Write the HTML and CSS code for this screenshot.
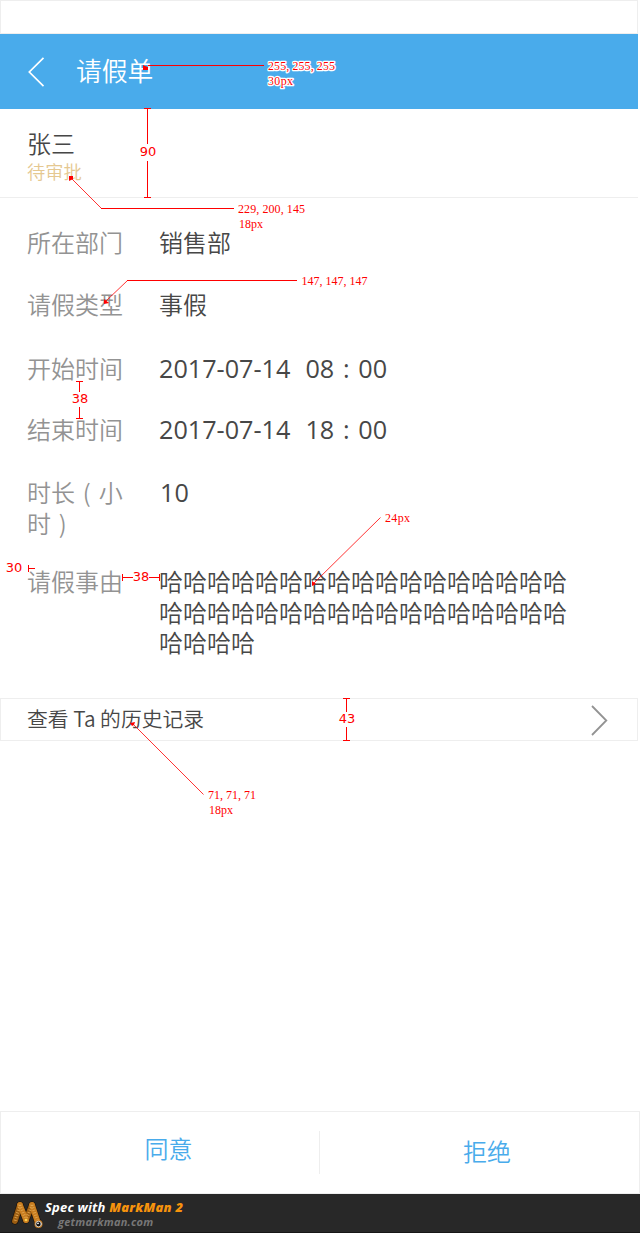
FILE: index.html
```html
<!DOCTYPE html>
<html lang="zh-CN">
<head>
<meta charset="utf-8">
<title>请假单</title>
<link rel="stylesheet" href="styles.css">
</head>
<body>
<div class="page">
  <div class="statusbar"></div>
  <header class="navbar">
    <svg class="back" width="17" height="30" viewBox="0 0 17 30"><path d="M15.500 .8 1.300 15 15.500 29.200"/></svg>
    <h1 class="title">请假单</h1>
  </header>
  <section class="person">
    <div class="name">张三</div>
    <div class="status">待审批</div>
  </section>
  <dl class="details">
    <div class="row dept"><dt>所在部门</dt><dd>销售部</dd></div>
    <div class="row type"><dt>请假类型</dt><dd>事假</dd></div>
    <div class="row start"><dt>开始时间</dt><dd class="num"><span>2017-07-14</span><span class="time">08<i>:</i>00</span></dd></div>
    <div class="row end"><dt>结束时间</dt><dd class="num"><span>2017-07-14</span><span class="time">18<i>:</i>00</span></dd></div>
    <div class="row hours"><dt>时长&nbsp;(&nbsp;小时&nbsp;)</dt><dd class="num ten">10</dd></div>
    <div class="row reason"><dt>请假事由</dt><dd>哈哈哈哈哈哈哈哈哈哈哈哈哈哈哈哈哈哈哈哈哈哈哈哈哈哈哈哈哈哈哈哈哈哈哈哈哈哈</dd></div>
  </dl>
  <a class="history"><span>查看 Ta 的历史记录</span>
    <svg class="more" width="17" height="31" viewBox="0 0 17 31"><path d="M1 1 15.300 15.500 1 30"/></svg>
  </a>
  <div class="actions">
    <button class="agree">同意</button>
    <button class="reject">拒绝</button>
  </div>
  <footer class="brand">
    <svg class="logo" width="34" height="32" viewBox="0 0 34 32">
      <g class="outline"><path d="M10 7 5 23M10 7l6 15M22 7l-6 15M22 7l6 18"/></g>
      <g class="stick"><path d="M10 7 5 23"/><path d="M22 7l-6 15"/></g>
      <g class="stick light"><path d="M10 7l6 15"/><path d="M22 7l6 18"/></g>
      <g class="ticks"><path d="M10 7 5 23M10 7l6 15M22 7l-6 15M22 7l6 18"/></g>
      <circle cx="16" cy="22" r="1.300" fill="#ffd34d"/>
      <circle cx="28.500" cy="26" r="4" fill="#c87d20"/><circle cx="28.500" cy="26" r="2.800" fill="#111" stroke="#ddd" stroke-width=".9"/><circle cx="28" cy="25.300" r=".9" fill="#fff"/>
    </svg>
    <div class="credits">
      <div class="spec">Spec with <b>MarkMan 2</b></div>
      <div class="site">getmarkman.com</div>
    </div>
  </footer>
  <svg class="marks" width="640" height="1233" viewBox="0 0 640 1233">
    <g class="lines">
      <path d="M148 65.500H264M144 108.500h7M147.500 108V144M147.500 161v36M144 197.500h7"/>
      <path d="M101 208.500H234M127 280.500H297"/>
      <path d="M76 381.500h7M79.500 381v11M79.500 407v11M76 418.500h7"/>
      <path d="M28.500 565v7M28 568.500h7M122.500 574v7M122 577.500h11M149 577.500h11M159.500 574v7"/>
      <path d="M343 698.500h7M346.500 698v14M346.500 727v14M343 740.500h7"/>
    </g>
    <g class="leaders"><path d="M72 179 101.500 208.500M106 301 127.500 280.500M314 583 380.500 517.500M133 724 203.500 794.500"/></g>
    <g class="tips"><path d="M143 68v-3l2 1 3 1v3h-5zM69 176h4v3l-2 1-2 1zM104 299l5 4-5 1zM312 581l4 3-4 2zM130 723l5-1-1 3-2 1z"/></g>
    <g class="note halo"><text x="268" y="70" textLength="67">255, 255, 255</text><text x="268" y="85" textLength="25">30px</text></g>
    <g class="note">
      <text x="238" y="213" textLength="67">229, 200, 145</text><text x="239" y="228" textLength="24">18px</text>
      <text x="301.500" y="285" textLength="66">147, 147, 147</text>
      <text x="385" y="522" textLength="25">24px</text>
      <text x="208" y="799" textLength="48">71, 71, 71</text><text x="209" y="814" textLength="24">18px</text>
    </g>
    <g class="size"><text x="148" y="156">90</text><text x="80" y="403">38</text><text x="14" y="572">30</text><text x="141" y="581">38</text><text x="347" y="723">43</text></g>
  </svg>
</div>
</body>
</html>
```

FILE: styles.css
```css
* { box-sizing: border-box; }
body { margin: 0; background: #fff; }
.page {
  position: relative;
  width: 640px;
  height: 1233px;
  display: flex;
  flex-direction: column;
  overflow: hidden;
  color: #474747;
  font-family: "Noto Sans CJK SC", sans-serif;
  font-weight: 350;
  font-size: 24px;
}
.statusbar { width: 638px; height: 34px; border: 1px solid #eee; }
.navbar { width: 638px; height: 75px; background: #49abeb; display: flex; align-items: center; padding-left: 28px; color: #fff; }
.back { fill: none; stroke: #fff; stroke-width: 1.7; }
.title { margin: 0 0 3px 31px; font-size: 25.8px; line-height: 36px; font-weight: 350; }
.person { width: 638px; height: 89px; border-bottom: 1px solid #eee; padding: 19px 0 0 27px; }
.name { line-height: 30px; }
.status { font-size: 18.3px; line-height: 27px; color: #e5c891; }
.details { margin: 0; padding: 29px 0 0 27px; height: 500px; }
.row { display: grid; grid-template-columns: 132px 411px; line-height: 30.5px; }
.row dt { color: #939393; width: 98px; }
.row dd { margin: 0; word-break: break-all; }
.dept { height: 62px; }
.type { height: 64px; }
.start { height: 61px; }
.end { height: 63px; }
.hours { height: 89px; }
.hours dt { word-spacing: 2.5px; }
.num { font-family: "Open Sans", "Noto Sans", sans-serif; font-weight: 400; font-size: 25.2px; display: flex; }
.time { margin-left: 15px; }
.time i { font-style: normal; display: inline-block; width: 24px; text-align: center; }
.ten { padding-left: 1px; }
.history { width: 638px; height: 43px; border: 1px solid #eee; display: flex; align-items: center; justify-content: space-between; padding: 0 29px 4px 26px; font-size: 20.8px; }
.more { fill: none; stroke: #939393; stroke-width: 1.8; margin-top: 5px; }
.actions { margin-top: auto; height: 83px; border: 1px solid #eee; display: grid; grid-template-columns: 319px 1fr; align-items: center; }
.actions button { border: 0; background: none; font: inherit; color: #49abeb; height: 43px; line-height: 34px; }
.actions .agree { border-right: 1px solid #eee; padding: 0 0 9px 17px; }
.actions .reject { padding: 0 0 3px 15px; }
.brand { height: 39px; background: #282828; border-bottom: 1px solid #171717; display: flex; padding: 4px 0 0 10px; }
.logo { fill: none; stroke-linecap: round; }
.outline { stroke: #1b1208; stroke-width: 7; }
.stick { stroke: #9c5d12; stroke-width: 5.8; }
.light { stroke: #c87d20; }
.ticks { stroke: #e0a650; stroke-width: 3; stroke-dasharray: .8 1.8; stroke-linecap: butt; }
.credits { font-family: "Open Sans", sans-serif; font-style: italic; font-weight: 700; color: #fff; padding: 1px 0 0 1px; white-space: nowrap; }
.spec { font-size: 13px; line-height: 17px; letter-spacing: .2px; }
.spec b { color: #f7930d; }
.site { font-size: 11px; line-height: 11px; color: #777; padding-left: 13px; letter-spacing: .25px; }
.marks { position: absolute; left: 0; top: 0; }
.lines { fill: none; stroke: #f00; shape-rendering: crispEdges; }
.leaders { fill: none; stroke: #f00; stroke-width: .8; }
.tips { fill: #f00; }
.note { font: 400 12px "Liberation Serif", serif; fill: #f00; }
.halo { stroke: #fff; stroke-width: 2.5; stroke-linejoin: round; paint-order: stroke; }
.size { font: 400 13px "DejaVu Sans", sans-serif; fill: #f00; text-anchor: middle; }
```
